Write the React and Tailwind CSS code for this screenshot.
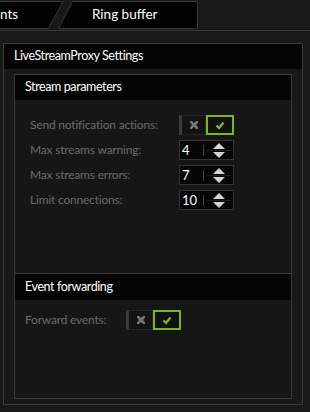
import React from "react";

const Toggle = () => (
  <div className="flex h-[20px] w-[55px]">
    <div className="flex w-[27px] items-center justify-center border border-l-[3px] border-[#262626] border-l-[#3c3c3c] bg-[#131313]">
      <svg width="8" height="8" viewBox="0 0 8 8">
        <path d="M1 1 L7 7 M7 1 L1 7" stroke="#777" strokeWidth="2.6" strokeLinecap="square" />
      </svg>
    </div>
    <div className="flex w-[28px] items-center justify-center border-2 border-[#7cb51d] bg-[#111]">
      <svg width="10" height="9" viewBox="0 0 10 9">
        <path d="M1.5 4.5 L4 7 L8.5 1.5" stroke="#7cb51d" strokeWidth="2.4" fill="none" />
      </svg>
    </div>
  </div>
);

const Spin = ({ value }) => (
  <div className="flex h-[20px] w-[55px] items-center border border-[#333] bg-[#050505]">
    <span className="w-[23px] pl-[2px] text-[13px] leading-none text-white">{value}</span>
    <div className="h-[11px] w-px bg-[#444]" />
    <div className="relative flex h-full flex-1 flex-col items-center justify-center gap-[3px]">
      <div className="absolute inset-x-[2px] top-1/2 h-px bg-[#1c1c1c]" />
      <svg width="12" height="6" viewBox="0 0 12 6">
        <path d="M0 6 L6 0 L12 6 Z" fill="#d4d4d4" />
      </svg>
      <svg width="12" height="6" viewBox="0 0 12 6">
        <path d="M0 0 L12 0 L6 6 Z" fill="#d4d4d4" />
      </svg>
    </div>
  </div>
);

const Row = ({ label, labelWidth, children }) => (
  <div className="flex h-[20px] items-center">
    <span className={`${labelWidth} text-[12px] tracking-[-0.2px] text-[#6a6a6a]`}>{label}</span>
    {children}
  </div>
);

const Header = ({ children, height = "h-[25px]" }) => (
  <div className={`flex ${height} items-center bg-[#050505] pl-[10px] text-[12.5px] tracking-[-0.4px] text-white`}>
    {children}
  </div>
);

export default function App() {
  return (
    <div className="h-[412px] w-[310px] overflow-hidden bg-[#181818] font-['Lato',sans-serif]">
      <div className="relative h-[31px] border-b border-[#3a3a3a]">
        <svg className="absolute inset-0" width="310" height="30">
          <polygon points="-3,1.5 63,1.5 48.5,28.5 -3,28.5" fill="#020202" stroke="#3a3a3a" />
          <polygon points="72.5,1.5 197.5,1.5 197.5,28.5 58.5,28.5" fill="#020202" stroke="#3a3a3a" />
        </svg>
        <div className="relative flex h-[28px] items-center text-[13.5px] text-white">
          <span className="w-[92px]">nts</span>
          <span>Ring buffer</span>
        </div>
      </div>

      <div className="pl-[3px] pt-[12px]">
        <div className="flex h-[362px] w-[300px] flex-col border border-[#3a3a3a]">
          <Header>LiveStreamProxy Settings</Header>
          <div className="flex flex-1 flex-col px-[10px] py-[5px]">
            <div className="flex flex-1 flex-col border border-[#3a3a3a] bg-[#161616]">
              <div className="flex h-[199px] flex-col border-b border-[#3a3a3a]">
                <Header>Stream parameters</Header>
                <div className="flex flex-col gap-[5px] pl-[15px] pt-[15px]">
                  <Row label="Send notification actions:" labelWidth="w-[149px]">
                    <Toggle />
                  </Row>
                  <Row label="Max streams warning:" labelWidth="w-[149px]">
                    <Spin value="4" />
                  </Row>
                  <Row label="Max streams errors:" labelWidth="w-[149px]">
                    <Spin value="7" />
                  </Row>
                  <Row label="Limit connections:" labelWidth="w-[149px]">
                    <Spin value="10" />
                  </Row>
                </div>
              </div>
              <Header height="h-[26px]">Event forwarding</Header>
              <div className="pl-[10px] pt-[10px]">
                <Row label="Forward events:" labelWidth="w-[101px]">
                  <Toggle />
                </Row>
              </div>
            </div>
          </div>
        </div>
      </div>
    </div>
  );
}
